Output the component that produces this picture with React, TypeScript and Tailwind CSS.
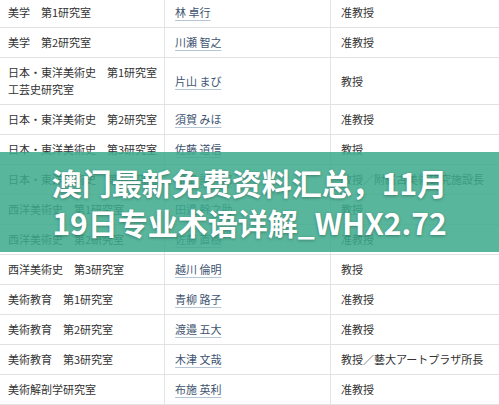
import React from "react";

type Row = { lab: string[]; name: string; title: string };

const rows: Row[] = [
  { lab: ["美学　第1研究室"], name: "林 卓行", title: "准教授" },
  { lab: ["美学　第2研究室"], name: "川瀬 智之", title: "准教授" },
  { lab: ["日本・東洋美術史　第1研究室", "工芸史研究室"], name: "片山 まび", title: "教授" },
  { lab: ["日本・東洋美術史　第2研究室"], name: "須賀 みほ", title: "准教授" },
  { lab: ["日本・東洋美術史　第3研究室"], name: "佐藤 道信", title: "教授" },
  { lab: ["日本・東洋美術史　第4研究室"], name: "松田 誠一郎", title: "教授／附属古美術研究施設長" },
  { lab: ["西洋美術史　第1研究室"], name: "田邉 幹之助", title: "教授" },
  { lab: ["西洋美術史　第2研究室"], name: "佐藤 直樹", title: "准教授" },
  { lab: ["西洋美術史　第3研究室"], name: "越川 倫明", title: "教授" },
  { lab: ["美術教育　第1研究室"], name: "青柳 路子", title: "准教授" },
  { lab: ["美術教育　第2研究室"], name: "渡邉 五大", title: "准教授" },
  { lab: ["美術教育　第3研究室"], name: "木津 文哉", title: "教授／藝大アートプラザ所長" },
  { lab: ["美術解剖学研究室"], name: "布施 英利", title: "准教授" },
];

export default function App() {
  return (
    <div
      className="relative w-[499px] h-[405px] overflow-hidden bg-white text-[11px] leading-[17px] text-[#333]"
      style={{ fontFamily: '"Noto Sans CJK JP", "Noto Sans", sans-serif' }}
    >
      <div className="-mt-[2px] flex flex-col">
        {rows.map((r, i) => (
          <div
            key={i}
            className="grid grid-cols-[164px_166px_1fr] border-b border-[#e2e2e2]"
          >
            <div className="py-[6px] pl-[8px] flex flex-col justify-center">
              {r.lab.map((l, j) => (
                <div key={j}>{l}</div>
              ))}
            </div>
            <div className="py-[6px] pl-[10px] border-l border-[#e4e4e4] flex items-center">
              <span className="text-[#3d5470] underline decoration-[#b5c6d6] underline-offset-[3px]">
                {r.name}
              </span>
            </div>
            <div className="py-[6px] pl-[10px] border-l border-[#e4e4e4] flex items-center">
              {r.title}
            </div>
          </div>
        ))}
      </div>

      <div className="absolute left-0 right-0 top-[152px] h-[100px] bg-[rgba(60,170,140,0.86)] flex items-center justify-center">
        <div
          className="text-white font-bold text-[30px] leading-[40px] text-center [text-shadow:0_1px_3px_rgba(0,0,0,0.3)]"
          style={{ fontFamily: '"Noto Sans CJK SC", "Noto Sans", sans-serif' }}
        >
          <div>澳门最新免费资料汇总，11月</div>
          <div>19日专业术语详解_WHX2.72</div>
        </div>
      </div>
    </div>
  );
}
